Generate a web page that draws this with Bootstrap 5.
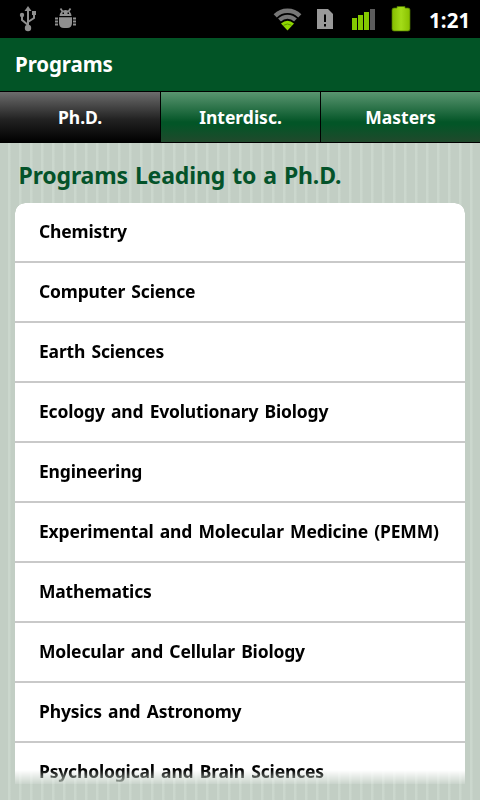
<!DOCTYPE html>
<html lang="en">
<head>
<meta charset="utf-8">
<meta name="viewport" content="width=device-width, initial-scale=1">
<title>Programs</title>
<link href="https://cdn.jsdelivr.net/npm/bootstrap@5.3.0/dist/css/bootstrap.min.css" rel="stylesheet">
<style>
body{font-family:"Noto Sans","Open Sans",sans-serif;font-weight:700;width:480px;height:800px;background:#c3d0c6 repeating-linear-gradient(90deg,#c2cec4 0 7.500px,#cbd7cd 8.500px 10px,#c2cec4 11px)}
.status{height:38px;background:#000}
.status svg{display:block}
.clock{font-size:20.5px;line-height:40px;letter-spacing:.1px}
.titlebar{height:53px;background:#025426;font-size:20.5px;line-height:52px;padding-left:15px;letter-spacing:-.1px}
.tabs{height:52px;border-top:1px solid #000;border-bottom:1px solid #000}
.tabs .nav-link{border-radius:0;padding:0;height:50px;line-height:51px;font-size:17.5px;color:#fff;background:linear-gradient(#5a9570,#035527 60%,#035527 65%,#20492c);letter-spacing:0}
.tabs .nav-link.active{background:linear-gradient(#6c6c6c,#222 55%,#000)}
.tabs .nav-item+.nav-item{border-left:1px solid #000}
.heading{font-size:23px;line-height:65px;height:60px;padding-left:18.500px;color:#04532a;letter-spacing:-.15px;word-spacing:1.200px}
.programs{height:581px;margin:0 15px;border-radius:10px 10px 0 0;-webkit-mask-image:linear-gradient(#000 567px,transparent 583px);mask-image:linear-gradient(#000 567px,transparent 583px)}
.programs .list-group-item{height:60px;line-height:57px;padding:0 0 0 24px;border:0;border-bottom:2px solid #c9c9c9;font-size:17.5px;color:#000;letter-spacing:-.18px;word-spacing:1.900px;white-space:nowrap}
</style>
<script src="https://cdn.jsdelivr.net/npm/bootstrap@5.3.0/dist/js/bootstrap.bundle.min.js"></script>
</head>
<body class="overflow-hidden">
<header>
<div class="status d-flex text-white">
<svg width="425" height="38" viewBox="0 0 425 38">
<g fill="none" stroke="#8f8f8f" stroke-width="2"><path d="M28 28V9M28 25L22 20V16M28 22L34 18V14"/></g>
<g fill="#8f8f8f"><path d="M28 6l3.500 5h-7z"/><circle cx="28" cy="28" r="3.200"/><circle cx="22" cy="15" r="2.200"/><path d="M32 11h4v4h-4z"/>
<path d="M59.500 16a6 6 0 0 1 12 0z"/><path d="M59 17.200h13v5.800q0 5-5 5h-3q-5 0-5-5z"/></g>
<path d="M62.500 11.500l-2-3M68.500 11.500l2-3M58 18.500h-3M58 21.500h-3M58 24.500h-3M73 18.500h3M73 21.500h3M73 24.500h3" stroke="#8f8f8f" stroke-width="1.800"/>
<path d="M62.500 12.500h1.500v1.500h-1.500zM67.500 12.500h1.500v1.500h-1.500z" fill="#000"/>
<g fill="none"><path d="M275.200 15.800a17.500 17.500 0 0 1 24.600 0" stroke="#777" stroke-width="4.500"/><path d="M279.500 20a11.500 11.500 0 0 1 16 0" stroke="#777" stroke-width="4"/></g>
<path d="M287.500 30.500l-6.500-7q6.500-5.500 13 0z" fill="#8fd600"/><path d="M283.500 25.300q4-2.600 8 0" stroke="#5a9300" fill="none"/>
<path d="M317 9h11l5 5v15h-16z" fill="#999"/><path d="M325 14.500v7.500M325 24v2.500" stroke="#000" stroke-width="2"/>
<path d="M364 12h5v18h-5zM358 15h5v15h-5zM352 18h5v12h-5z" fill="#84c900"/><path d="M370 9h5v21h-5z" fill="#5c5c5c"/>
<defs><linearGradient id="bat"><stop stop-color="#84bd00"/><stop offset=".5" stop-color="#a4dc18"/><stop offset="1" stop-color="#88c000"/></linearGradient></defs>
<path d="M394 8h3V6.500h8V8h3q2 0 2 2v19q0 2-2 2h-14q-2 0-2-2V10q0-2 2-2z" fill="url(#bat)" stroke="#4f7800" stroke-width=".7"/>
</svg>
<span class="clock ms-1">1:21</span>
</div>
<div class="titlebar text-white">Programs</div>
<ul class="tabs nav nav-pills nav-fill row-cols-3 m-0">
<li class="nav-item col"><a class="nav-link active" href="#">Ph.D.</a></li>
<li class="nav-item col"><a class="nav-link" href="#">Interdisc.</a></li>
<li class="nav-item col"><a class="nav-link" href="#">Masters</a></li>
</ul>
</header>
<main>
<h1 class="heading m-0 fw-bold"><span>Programs Leading to a Ph.D.</span></h1>
<div class="programs list-group overflow-hidden d-block">
<div class="list-group-item">Chemistry</div>
<div class="list-group-item">Computer Science</div>
<div class="list-group-item">Earth Sciences</div>
<div class="list-group-item">Ecology and Evolutionary Biology</div>
<div class="list-group-item">Engineering</div>
<div class="list-group-item">Experimental and Molecular Medicine (PEMM)</div>
<div class="list-group-item">Mathematics</div>
<div class="list-group-item">Molecular and Cellular Biology</div>
<div class="list-group-item">Physics and Astronomy</div>
<div class="list-group-item">Psychological and Brain Sciences</div>
</div>
</main>
</body>
</html>
